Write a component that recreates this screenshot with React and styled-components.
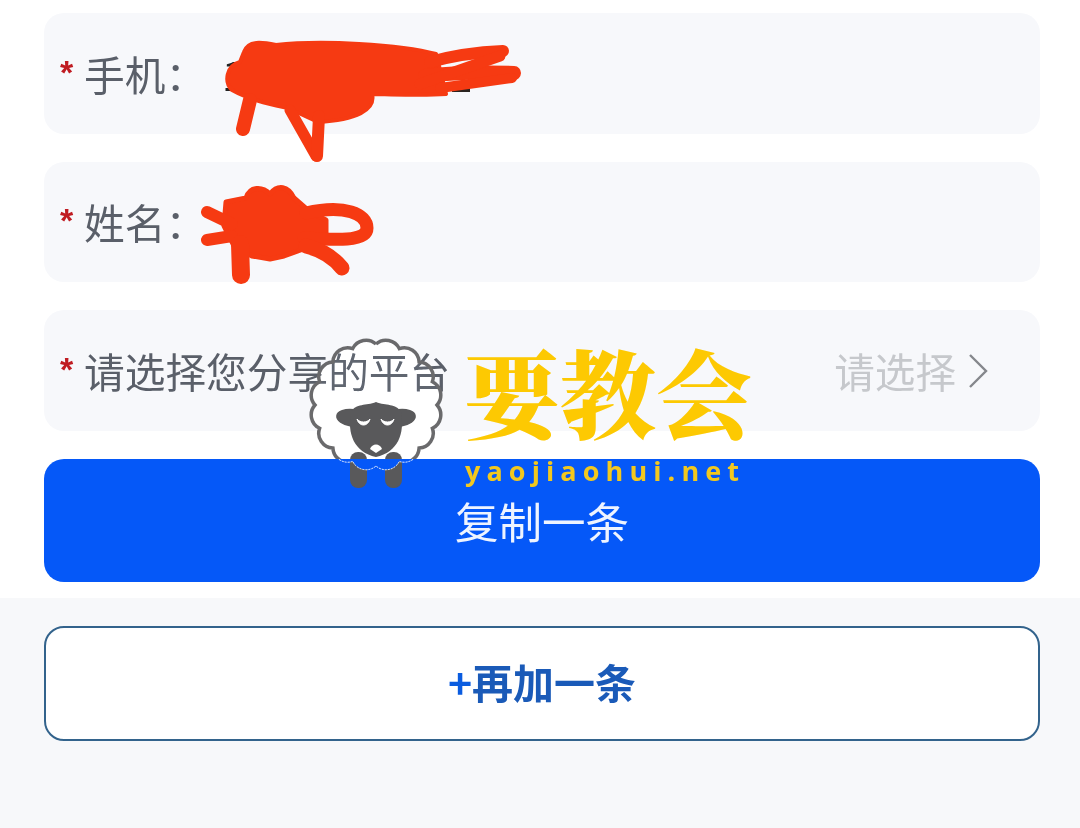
import React from "react";
import styled, { createGlobalStyle } from "styled-components";

const CJK = `"Noto Sans CJK SC", "Noto Sans", sans-serif`;

const GlobalStyle = createGlobalStyle`
  html, body {
    margin: 0;
    background: #fff;
    font-family: ${CJK};
  }
`;

// scalloped outline of the sheep's fleece
const fleecePath = (cx, cy, r, bumps) => {
  const pts = [];
  for (let i = 0; i < bumps; i++) {
    const a = (i / bumps) * Math.PI * 2 - Math.PI / 2;
    pts.push([cx + Math.cos(a) * r, cy + Math.sin(a) * r]);
  }
  const bump = ((2 * Math.PI * r) / bumps) * 0.62;
  let d = `M${pts[0][0].toFixed(1)} ${pts[0][1].toFixed(1)}`;
  for (let i = 1; i <= bumps; i++) {
    const p = pts[i % bumps];
    d += ` A${bump.toFixed(1)} ${bump.toFixed(1)} 0 0 1 ${p[0].toFixed(1)} ${p[1].toFixed(1)}`;
  }
  return d;
};

const App = () => {
  const fleece = fleecePath(376, 405, 61, 16);

  return (
    <>
      <GlobalStyle />
      <Page>
        <Form>
          <Field>
            <Star>*</Star>
            <Label>手机：</Label>
            <Value>1</Value>
          </Field>
          <Field>
            <Star>*</Star>
            <Label>姓名：</Label>
          </Field>
          <Field>
            <Star>*</Star>
            <Label>请选择您分享的平台</Label>
            <Picker>
              请选择
              <svg width="24" height="36" viewBox="0 0 24 36" fill="none">
                <path d="M4 2 L20 18 L4 34" stroke="#85878c" strokeWidth="2.4" />
              </svg>
            </Picker>
          </Field>
          <CopyButton>复制一条</CopyButton>
        </Form>
        <Footer>
          <AddButton>
            <Plus>+</Plus>再加一条
          </AddButton>
        </Footer>

        {/* whitens the field inside the fleece, the label stays readable */}
        <FleeceWash viewBox="0 0 1080 828">
          <defs>
            <clipPath id="above">
              <rect x="0" y="0" width="1080" height="459" />
            </clipPath>
            <clipPath id="below">
              <rect x="0" y="459" width="1080" height="100" />
            </clipPath>
          </defs>
          <path d={fleece} fill="#111" clipPath="url(#above)" />
        </FleeceWash>

        <Overlay viewBox="0 0 1080 828">
          {/* red scribble over the phone number */}
          <rect x="452" y="88" width="18" height="4" fill="#2a2420" />
          <g fill="#f63a12" stroke="#f63a12" strokeLinecap="round" strokeLinejoin="round">
            <path
              strokeWidth="4"
              d="M244 52 C248 40 262 42 276 45 C320 40 400 44 436 54 L446 94 C420 96 390 94 372 94 C376 110 356 120 318 122 L288 108 C270 104 250 100 232 90 C224 82 226 66 240 62 Z"
            />
            <g fill="none">
              <path strokeWidth="14" d="M243 129 L250 100" />
              <path strokeWidth="11" d="M316 156 L290 110" />
              <path strokeWidth="12" d="M317 156 L319 116" />
              <path strokeWidth="12" d="M430 62 C455 55 480 52 503 51" />
              <path strokeWidth="14" d="M425 76 C455 72 490 72 514 73" />
              <path strokeWidth="11" d="M420 84 L500 56" />
              <path strokeWidth="10" d="M440 88 L512 78" />
            </g>
          </g>

          {/* red scribble over the name */}
          <g fill="#f63a12" stroke="#f63a12" strokeLinecap="round" strokeLinejoin="round">
            <path
              strokeWidth="5"
              d="M226 202 L246 198 C250 186 262 186 270 194 C278 184 288 186 294 198 L310 212 L326 220 L326 240 L306 248 L284 256 L270 259 L252 256 L234 246 L224 226 Z"
            />
            <g fill="none">
              <path strokeWidth="12" d="M207 212 L232 224" />
              <path strokeWidth="12" d="M207 240 L232 236" />
              <path strokeWidth="18" d="M241 275 L240 244" />
              <path strokeWidth="13" d="M306 213 C345 204 367 214 367 228 C367 242 335 240 304 238" />
              <path strokeWidth="15" d="M306 246 C322 250 334 258 342 268" />
            </g>
          </g>

          {/* sheep watermark */}
          <g fill="#59595b">
            <rect x="350" y="452" width="17" height="36" rx="8" />
            <rect x="385" y="452" width="17" height="36" rx="8" />
          </g>
          <path d={fleece} fill="none" stroke="#6a6a6c" strokeWidth="3.5" clipPath="url(#above)" />
          <path d={fleece} fill="#0558f8" stroke="#fff" strokeWidth="1" strokeDasharray="2 1" clipPath="url(#below)" />
          <g fill="#59595b">
            <ellipse cx="353" cy="418" rx="17" ry="9" transform="rotate(8 353 418)" />
            <ellipse cx="399" cy="418" rx="17" ry="9" transform="rotate(-8 399 418)" />
            <path d="M351 412 C356 403 366 406 376 402 C386 406 396 403 401 412 C405 434 398 452 376 457 C354 452 347 434 351 412 Z" />
          </g>
          <path
            d="M357 419 C359 427 368 427 370 419 C367 423 360 423 357 419 Z M381 419 C383 427 392 427 394 419 C391 423 384 423 381 419 Z"
            fill="#fff"
            stroke="#fff"
            strokeWidth="1"
          />
          <path d="M370 449 C372 443 380 443 382 449 L376 453 Z" fill="#fff" />
        </Overlay>

        <Watermark>
          <WatermarkTitle>要教会</WatermarkTitle>
          <WatermarkDomain>yaojiaohui.net</WatermarkDomain>
        </Watermark>
      </Page>
    </>
  );
};

export default App;

const Page = styled.div`
  position: relative;
  display: flex;
  flex-direction: column;
  width: 1080px;
  height: 828px;
  overflow: hidden;
  background: #fff;
`;

const Form = styled.div`
  display: flex;
  flex-direction: column;
  gap: 28px;
  padding: 13px 40px 16px 44px;
`;

const Field = styled.div`
  display: flex;
  align-items: center;
  height: 120.5px;
  padding: 2px 50px 0 16px;
  border-radius: 20px;
  background: #f7f8fb;
  box-sizing: border-box;
`;

const Star = styled.span`
  width: 24px;
  margin-top: -5px;
  font-family: "Liberation Sans", sans-serif;
  font-size: 34px;
  font-weight: 700;
  line-height: 1;
  color: #c01c22;
`;

const Label = styled.span`
  font-size: 40.7px;
  line-height: 1;
  color: #5a5f69;
  white-space: nowrap;
`;

const Value = styled.span`
  margin-left: 16px;
  font-size: 40px;
  line-height: 1;
  color: #222;
`;

const Picker = styled.div`
  display: flex;
  align-items: center;
  gap: 10px;
  margin-left: auto;
  font-size: 40.6px;
  line-height: 1;
  color: #c6c8cc;
`;

const CopyButton = styled.div`
  display: flex;
  align-items: center;
  justify-content: center;
  height: 123px;
  border-radius: 20px;
  background: #0558f8;
  font-size: 43.5px;
  color: #eef4ff;
`;

const Footer = styled.div`
  flex: 1;
  padding: 28px 40px 0 44px;
  background: #f7f8fa;
`;

const AddButton = styled.div`
  display: flex;
  align-items: center;
  justify-content: center;
  height: 115px;
  padding-bottom: 4px;
  border: 2px solid #33638c;
  border-radius: 20px;
  background: #fff;
  box-sizing: border-box;
  font-size: 41px;
  font-weight: 700;
  color: #1a5ab8;
`;

const Plus = styled.span`
  color: #0a5ce0;
`;

const Overlay = styled.svg`
  position: absolute;
  top: 0;
  left: 0;
  width: 1080px;
  height: 828px;
  pointer-events: none;
`;

const FleeceWash = styled(Overlay)`
  mix-blend-mode: color-dodge;
`;

const Watermark = styled.div`
  position: absolute;
  top: 335px;
  left: 464px;
  display: flex;
  flex-direction: column;
  pointer-events: none;
`;

const WatermarkTitle = styled.div`
  font-family: "Noto Serif CJK SC", ${CJK};
  font-size: 96px;
  font-weight: 900;
  line-height: 110px;
  color: #fdc902;
  white-space: nowrap;
`;

const WatermarkDomain = styled.div`
  margin: 10px 0 0 1px;
  font-family: "Open Sans", sans-serif;
  font-size: 27px;
  font-weight: 700;
  line-height: 32px;
  letter-spacing: 6.1px;
  color: #f2c81e;
  white-space: nowrap;
`;
